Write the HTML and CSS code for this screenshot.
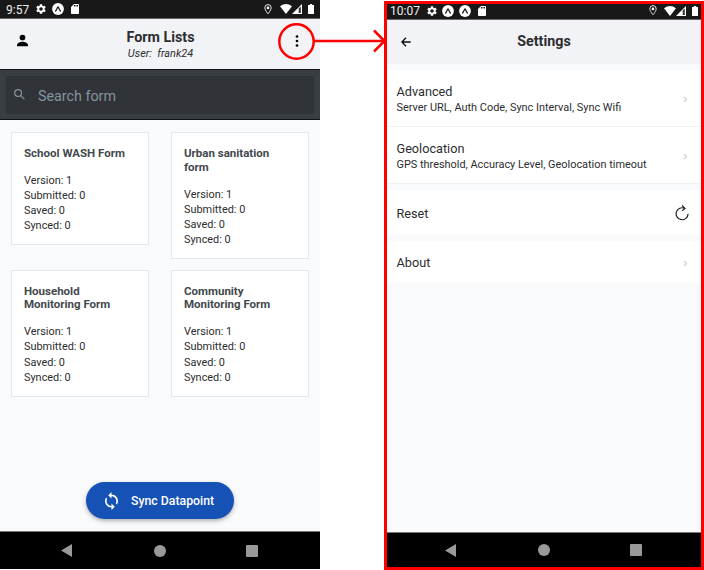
FILE: index.html
```html
<!DOCTYPE html>
<html lang="en">
<head>
<meta charset="utf-8">
<title>Form Lists and Settings</title>
<link rel="stylesheet" href="styles.css">
</head>
<body>
<svg class="defs" width="0" height="0">
  <symbol id="gear" viewBox="2 2 20 20"><path d="M19.14 12.94c.04-.3.06-.61.06-.94s-.02-.64-.07-.94l2.03-1.58c.18-.14.23-.41.12-.61l-1.92-3.32c-.12-.22-.37-.29-.59-.22l-2.39.96c-.5-.38-1.03-.7-1.62-.94l-.36-2.54c-.04-.24-.24-.41-.48-.41h-3.84c-.24 0-.43.17-.47.41l-.36 2.54c-.59.24-1.13.57-1.62.94l-2.39-.96c-.22-.08-.47 0-.59.22L2.74 8.87c-.12.21-.08.47.12.61l2.03 1.58c-.05.3-.09.63-.09.94s.02.64.07.94l-2.03 1.58c-.18.14-.23.41-.12.61l1.92 3.32c.12.22.37.29.59.22l2.39-.96c.5.38 1.03.7 1.62.94l.36 2.54c.05.24.24.41.48.41h3.84c.24 0 .44-.17.47-.41l.36-2.54c.59-.24 1.13-.56 1.62-.94l2.39.96c.22.08.47 0 .59-.22l1.92-3.32c.12-.22.07-.47-.12-.61zM12 15.6A3.6 3.6 0 1 1 12 8.4a3.6 3.6 0 0 1 0 7.2z"/></symbol>
  <symbol id="expo" viewBox="0 0 12 12"><circle cx="6" cy="6" r="5.900"/><path d="M3.600 8C4.500 7 5.100 5.600 5.600 4.300q.4-.8.8 0C6.900 5.600 7.500 7 8.400 8" fill="none" stroke="#181818" stroke-width="1.200" stroke-linecap="round"/></symbol>
  <symbol id="sd" viewBox="4 2 16 20"><path d="M18 2h-8L4 8v12c0 1.100.9 2 2 2h12c1.100 0 2-.9 2-2V4c0-1.100-.9-2-2-2zm-6 5h-2V4h2v3zm3 0h-2V4h2v3zm3 0h-2V4h2v3z"/></symbol>
  <symbol id="pin" viewBox="0 0 8 11"><path d="M4 .6A3.200 3.200 0 0 0 .8 3.800C.8 6 4 9.800 4 9.800S7.200 6 7.200 3.800A3.200 3.200 0 0 0 4 .6z" fill="none" stroke="#e8e8e8" stroke-width="1"/><circle cx="4" cy="3.900" r="1.300"/></symbol>
  <symbol id="wifi" viewBox="0 0 12 10"><path d="M0 2.200Q6-2 12 2.200L6 10z"/></symbol>
  <symbol id="signal" viewBox="0 0 10 10"><path d="M0 10 10 0v10z"/><path d="M6.700 4.500 8.800 2.400V8.900H6.700z" fill="#333"/></symbol>
  <symbol id="battery" viewBox="0 0 6 10"><path d="M1.800 0h2.400v1H6v9H0V1h1.800z"/></symbol>
  <symbol id="chevron" viewBox="0 0 5 7"><path d="M1 .9 3.600 3.500 1 6.100" fill="none" stroke="#cbccd0" stroke-width="1.100"/></symbol>
</svg>
<main class="board">
  <section class="phone forms">
    <div class="status">
      <span class="time">9:57</span>
      <svg class="i-gear"><use href="#gear"/></svg>
      <svg class="i-expo"><use href="#expo"/></svg>
      <svg class="i-sd"><use href="#sd"/></svg>
      <span class="spacer"></span>
      <svg class="i-pin"><use href="#pin"/></svg>
      <svg class="i-wifi"><use href="#wifi"/></svg>
      <svg class="i-signal"><use href="#signal"/></svg>
      <svg class="i-battery"><use href="#battery"/></svg>
    </div>
    <header class="bar">
      <svg class="user" viewBox="0 0 12 13"><circle cx="6" cy="3.200" r="3.100"/><path d="M0 12.800v-1.300C0 9 4 7.800 6 7.800s6 1.200 6 3.700v1.300z"/></svg>
      <div class="heading"><h1>Form Lists</h1><p>User:&nbsp; frank24</p></div>
      <svg class="more" viewBox="0 0 4 12"><circle cx="2" cy="1.500" r="1.350"/><circle cx="2" cy="6" r="1.350"/><circle cx="2" cy="10.500" r="1.350"/></svg>
    </header>
    <div class="search">
      <div class="field">
        <svg viewBox="0 0 11 11"><circle cx="4.100" cy="4.100" r="3.400"/><path d="m6.700 6.700 3.700 3.700"/></svg>
        <span>Search form</span>
      </div>
    </div>
    <div class="cards">
      <article class="card"><h2>School WASH Form</h2><p>Version: 1</p><p>Submitted: 0</p><p>Saved: 0</p><p>Synced: 0</p></article>
      <article class="card"><h2>Urban sanitation form</h2><p>Version: 1</p><p>Submitted: 0</p><p>Saved: 0</p><p>Synced: 0</p></article>
      <article class="card"><h2>Household Monitoring Form</h2><p>Version: 1</p><p>Submitted: 0</p><p>Saved: 0</p><p>Synced: 0</p></article>
      <article class="card"><h2>Community Monitoring Form</h2><p>Version: 1</p><p>Submitted: 0</p><p>Saved: 0</p><p>Synced: 0</p></article>
    </div>
    <button class="sync">
      <svg viewBox="4 1 16 22"><path d="M12 4V1L8 5l4 4V6c3.310 0 6 2.690 6 6 0 1.010-.25 1.970-.7 2.800l1.460 1.460C19.540 15.030 20 13.570 20 12c0-4.420-3.580-8-8-8zm0 14c-3.310 0-6-2.690-6-6 0-1.010.25-1.970.7-2.800L5.240 7.740C4.460 8.970 4 10.430 4 12c0 4.420 3.580 8 8 8v3l4-4-4-4v3z"/></svg>
      <span>Sync Datapoint</span>
    </button>
    <nav class="nav"><svg class="back" viewBox="0 0 11 13"><path d="M0 6.500 11 0v13z"/></svg><i class="home"></i><i class="recent"></i></nav>
  </section>

  <section class="phone settings">
    <div class="status">
      <span class="time">10:07</span>
      <svg class="i-gear"><use href="#gear"/></svg>
      <svg class="i-expo"><use href="#expo"/></svg>
      <svg class="i-expo"><use href="#expo"/></svg>
      <svg class="i-sd"><use href="#sd"/></svg>
      <span class="spacer"></span>
      <svg class="i-pin"><use href="#pin"/></svg>
      <svg class="i-wifi"><use href="#wifi"/></svg>
      <svg class="i-signal"><use href="#signal"/></svg>
      <svg class="i-battery"><use href="#battery"/></svg>
    </div>
    <header class="bar">
      <svg class="arrow-back" viewBox="0 0 10 10"><path d="M9.700 5H1M5 .8.900 5 5 9.200"/></svg>
      <h1>Settings</h1>
    </header>
    <div class="list">
      <div class="row tall"><div><h3>Advanced</h3><p>Server URL, Auth Code, Sync Interval, Sync Wifi</p></div><svg class="chev"><use href="#chevron"/></svg></div>
      <div class="row tall last"><div><h3>Geolocation</h3><p>GPS threshold, Accuracy Level, Geolocation timeout</p></div><svg class="chev"><use href="#chevron"/></svg></div>
      <div class="row reset"><h3>Reset</h3><svg class="reload" viewBox="0 0 14 16"><path d="M9.800 3.400A6 6 0 1 0 13.100 8.800M7 .5l3 2.900-3 2.500"/></svg></div>
      <div class="row about"><h3>About</h3><svg class="chev"><use href="#chevron"/></svg></div>
    </div>
    <nav class="nav"><svg class="back" viewBox="0 0 11 13"><path d="M0 6.500 11 0v13z"/></svg><i class="home"></i><i class="recent"></i></nav>
  </section>

  <svg class="callout" viewBox="0 0 110 40"><circle cx="18.500" cy="19.500" r="17.200"/><path d="M36 19h70M96 8.500 106.500 19 96 29.500"/></svg>
</main>
</body>
</html>
```
FILE: styles.css
```css
* { box-sizing: border-box; }
body, h1, h2, h3, p { margin: 0; }
body { background: #fff; font-family: Roboto, sans-serif; color: #2c2d2f; overflow: hidden; }
svg { display: block; flex: none; }
.defs { position: absolute; }
.board { position: relative; display: flex; justify-content: space-between; width: 704px; height: 570px; }
.phone { display: flex; flex-direction: column; width: 320px; background: #f8fafc; }
.forms { height: 569px; }
.settings { height: 569px; margin-top: 1px; border: 3px solid #f00; }

.status { display: flex; align-items: center; flex: none; background: #181818; color: #eee; fill: #fff; border-bottom: 1px solid #666; }
.forms .status { height: 19px; padding: 0 6px; }
.settings .status { height: 16px; padding: 0 3px 2px; }
.time { font-size: 12px; line-height: 14px; }
.forms .time { width: 30px; padding-top: 1px; }
.settings .time { width: 37px; }
.spacer { flex: 1; }
.i-gear { width: 10px; height: 10px; }
.i-expo { width: 12px; height: 12px; margin-left: 6px; }
.settings .i-expo { margin-left: 5px; }
.i-sd { width: 8px; height: 10px; margin-left: 7px; }
.i-pin { width: 8px; height: 11px; margin-right: 8px; }
.settings .i-pin { margin-right: 7px; }
.i-wifi { width: 12px; height: 10px; }
.i-signal { width: 10px; height: 10px; }
.i-battery { width: 6px; height: 10px; margin-left: 6px; }

.bar { position: relative; display: flex; flex: none; background: #f2f3f6; }
.forms .bar { height: 50px; padding: 9px 21px 0 17px; justify-content: space-between; }
.user { width: 11px; height: 13px; margin-top: 6px; }
.heading { text-align: center; margin-right: 2px; }
h1 { font-size: 14.300px; line-height: 18px; font-weight: 700; }
.heading p { font-size: 10.900px; line-height: 16px; font-style: italic; }
.more { width: 4px; height: 12px; margin-top: 7px; }

.search { flex: none; height: 51px; padding: 6px; background: #393e42; border: solid #101214; border-width: 1px 0; }
.field { display: flex; align-items: center; height: 38px; padding: 1px 8px 0; border-radius: 3px; background: #303337; color: #86939e; font-size: 14.300px; }
.field svg { width: 11px; height: 11px; margin: -2px 13px 0 0; fill: none; stroke: #86939e; stroke-width: 1.200; }

.cards { display: grid; grid-template-columns: 138px 138px; align-items: start; gap: 11px 22px; padding: 12px 11px 0; }
.card { padding: 14px 12px 11px; background: #fff; border: 1px solid #e1e8ee; }
.card h2 { margin-bottom: 12.500px; font-size: 11.500px; line-height: 13.500px; font-weight: 700; color: #43484d; }
.card p { font-size: 10.900px; line-height: 15.100px; }

.sync { display: flex; align-items: center; align-self: center; width: 148px; height: 37px; margin-top: auto; margin-bottom: 12px; padding: 0 0 0 19px; border: 0; border-radius: 19px; background: #1651b6; color: #fff; font: 500 12.300px Roboto, sans-serif; box-shadow: 0 2px 4px rgba(0,0,0,.3); }
.sync svg { width: 13px; height: 18px; margin-right: 13px; fill: #fff; }

.nav { display: grid; grid-template-columns: repeat(3, 1fr); flex: none; align-items: center; justify-items: center; background: #000; border-top: 1px solid #777; }
.forms .nav { height: 38px; padding: 0 21px; }
.settings .nav { height: 35px; padding: 0 19px 0; margin-top: auto; }
.back { width: 11px; height: 13px; margin-right: 2px; fill: #999; }
.settings .back { margin-right: 4px; }
.home, .recent { width: 12px; height: 12px; background: #999; }
.home { border-radius: 50%; }
.nav .recent { margin-right: 1px; border-radius: 1px; }

.settings .bar { height: 44px; padding-bottom: 2px; align-items: center; justify-content: center; }
.arrow-back { position: absolute; left: 14px; top: 17px; width: 10px; height: 10px; fill: none; stroke: #111; stroke-width: 1.400; }
.list { padding-top: 6px; }
.row { display: flex; align-items: center; justify-content: space-between; padding: 0 13px 0 9.500px; background: #fff; }
.tall { height: 57px; padding-top: 3px; border-bottom: 1px solid #f0f2f4; }
.row h3 { font-size: 12.700px; line-height: 16px; font-weight: 400; }
.row p { font-size: 10.920px; line-height: 16px; }
.chev { width: 5px; height: 7px; }
.reset { height: 45px; margin-top: 6px; padding-top: 2px; }
.about { height: 42px; margin-top: 6px; padding-top: 2px; }
.reload { width: 14px; height: 16px; margin: -2px -1px 0 0; fill: none; stroke: #222; stroke-width: 1.200; }

.callout { position: absolute; left: 278px; top: 22px; width: 110px; height: 40px; fill: none; stroke: #f00; stroke-width: 2.500; }
```
